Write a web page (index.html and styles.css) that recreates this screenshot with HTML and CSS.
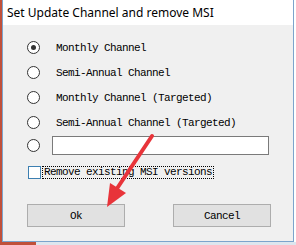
FILE: index.html
```html
<!DOCTYPE html>
<html lang="en">
<head>
  <meta charset="UTF-8" />
  <title>Set Update Channel and remove MSI</title>
  <link rel="stylesheet" href="styles.css">
</head>
<body>
  <div class="screen">
    <div class="left-strip"></div>
    <div class="window">
      <div class="title-bar">Set Update Channel and remove MSI</div>
      <div class="client">
        <div class="options">
          <label class="option"><span class="radio checked"></span>Monthly Channel</label>
          <label class="option"><span class="radio"></span>Semi-Annual Channel</label>
          <label class="option"><span class="radio"></span>Monthly Channel (Targeted)</label>
          <label class="option"><span class="radio"></span>Semi-Annual Channel (Targeted)</label>
          <label class="option custom"><span class="radio"></span><span class="text-box"></span></label>
        </div>
        <label class="check-row"><span class="checkbox"></span><span class="focus-label">Remove existing MSI versions</span></label>
        <div class="buttons">
          <button class="btn">Ok</button>
          <button class="btn">Cancel</button>
        </div>
      </div>
    </div>
    <div class="right-edge"></div>
  </div>
  <div class="bottom-strip"><div class="bottom-red"></div></div>

  <svg class="arrow" width="296" height="245" viewBox="0 0 296 245">
    <path d="M152 136 L116 190" stroke="#e8343a" stroke-width="4" stroke-linecap="round" fill="none"/>
    <path d="M107 207 L110 183 L126 193 Z" fill="#e8343a"/>
  </svg>
</body>
</html>
```
FILE: styles.css
```css
body {
  margin: 0;
  background-color: #ffffff;
  font-family: 'Liberation Mono', monospace;
  font-size: 11px;
  letter-spacing: -0.6px;
  color: #000;
  overflow: hidden;
}

.screen {
  display: flex;
  height: 242px;
}

.left-strip {
  width: 2px;
  background-color: #c0503a;
}

.window {
  width: 290px;
  border: 1px solid #7ca4cc;
  border-top: none;
  background-color: #f0f0f0;
  display: flex;
  flex-direction: column;
}

.right-edge {
  flex: 1;
  background-color: #fff;
}

.title-bar {
  height: 25px;
  background-color: #fff;
  font-family: 'Noto Sans', sans-serif;
  font-size: 12px;
  letter-spacing: 0;
  line-height: 26px;
  padding-left: 4px;
}

.client {
  flex: 1;
  padding: 16px 0 0 24px;
}

.options {
  display: flex;
  flex-direction: column;
  gap: 12px;
}

.option {
  display: flex;
  align-items: center;
  height: 13px;
}

.radio {
  width: 11px;
  height: 11px;
  border: 1px solid #333;
  border-radius: 50%;
  background-color: #fff;
  margin-right: 16px;
  position: relative;
  flex-shrink: 0;
}

.radio.checked::after {
  content: "";
  position: absolute;
  left: 3px;
  top: 3px;
  width: 5px;
  height: 5px;
  border-radius: 50%;
  background-color: #333;
}

.option.custom {
  margin-top: -5px;
  height: 19px;
}

.option.custom .radio {
  margin-right: 12px;
}

.text-box {
  width: 215px;
  height: 17px;
  border: 1px solid #7a7a7a;
  background-color: #fff;
}

.check-row {
  display: flex;
  align-items: center;
  margin-top: 11px;
  margin-left: 1px;
}

.checkbox {
  width: 11px;
  height: 11px;
  border: 1px solid #3c7fb1;
  background-color: #fff;
  margin-right: 1px;
}

.focus-label {
  border: 1px dotted #000;
  padding: 0 1px;
  line-height: 11px;
}

.buttons {
  display: flex;
  justify-content: space-between;
  width: 244px;
  margin-top: 25px;
}

.btn {
  width: 98px;
  height: 23px;
  background-color: #e1e1e1;
  border: 1px solid #adadad;
  font-family: 'Liberation Mono', monospace;
  font-size: 11px;
  letter-spacing: -0.6px;
  padding: 0;
}

.bottom-strip {
  height: 3px;
  background-color: #dde6ee;
}

.bottom-red {
  width: 36px;
  height: 3px;
  background-color: #c0503a;
}

.arrow {
  position: absolute;
  left: 0;
  top: 0;
  pointer-events: none;
}
```
